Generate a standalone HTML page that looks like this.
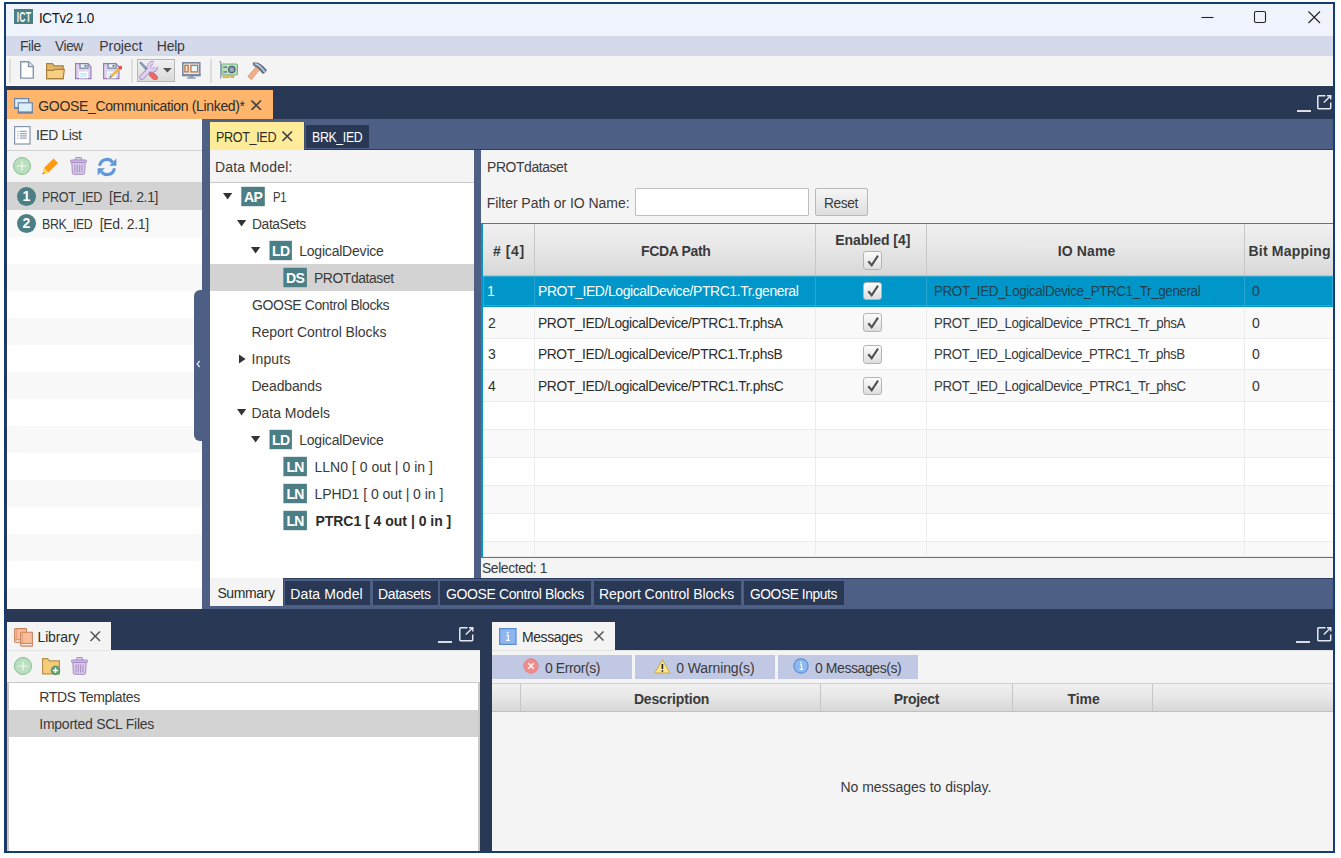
<!DOCTYPE html>
<html lang="en">
<head>
<meta charset="utf-8">
<title>ICTv2 1.0</title>
<style>
*{box-sizing:border-box;margin:0;padding:0}
html,body{width:1341px;height:858px;overflow:hidden;background:#fff}
body{position:relative;font-family:"Liberation Sans",sans-serif;font-size:14px;color:#3a3a3a;line-height:1}
.a{position:absolute}
.t{position:absolute;white-space:pre;line-height:16px;height:16px}
.w{color:#fff}
.b{font-weight:700}
#win{left:4px;top:2px;width:1331px;height:851px;background:#283855;border:2px solid #123c78}
/* inside #win coordinates are offset by 6,4 : we use a shim */
#in{left:-6px;top:-4px;width:1341px;height:858px}
#title{left:6px;top:4px;width:1327px;height:32px;background:#eff3fb}
#menu{left:6px;top:36px;width:1327px;height:20px;background:#d5daea}
#tool{left:6px;top:56px;width:1327px;height:30px;background:#f4f4f4}
.sep{width:2px;background:#dedede;top:59px;height:23.500px}
.mid{background:#4d5f84}
.pane{background:#f4f4f4}
.sel{background:#d3d3d3}
.ic{background:#4b7f85;color:#fff;font-weight:700;text-align:center;font-size:14px;line-height:20px;height:20px;width:23px;letter-spacing:-0.700px}
.tab{background:#283855;color:#fff}
.hd{background:linear-gradient(#f0f0f0,#e6e6e6 50%,#d8d8d8);border-right:1px solid #c6c6c6;border-bottom:1px solid #c0c0c0}
.cb{width:19px;height:18.500px;border:1px solid #b4b4b4;border-radius:3px;background:linear-gradient(#fdfdfd,#dedede)}
.fb{background:#c1c8e4;height:24px;top:655px}
</style>
</head>
<body>
<div id="win" class="a"><div id="in" class="a">

<!-- title bar -->
<div id="title" class="a"></div>
<div class="a" style="left:14.300px;top:9.200px;width:18.500px;height:15px;background:#4b7f85"></div><div class="a b" style="left:3.500px;top:8.500px;width:40px;height:16px;line-height:16px;text-align:center;color:#eef6f6;font-size:14.500px;letter-spacing:0.300px;transform:scaleX(0.600)">ICT</div>
<svg class="a" style="left:1195px;top:4px" width="138" height="32" viewBox="0 0 138 32"><g stroke="#222" stroke-width="1.1" fill="none"><path d="M6.500 13.500H18.500"/><rect x="59.500" y="7.500" width="11" height="11" rx="1.500"/><path d="M113.500 7.500L125 19M125 7.500L113.500 19"/></g></svg>

<!-- menu bar -->
<div id="menu" class="a"></div>

<!-- toolbar -->
<div id="tool" class="a"></div>
<div class="a" style="left:6px;top:85px;width:1327px;height:1px;background:#fdfdfd"></div>
<div class="a sep" style="left:9.200px"></div>
<div class="a sep" style="left:130.800px"></div>
<div class="a sep" style="left:210.400px"></div>
<div class="a" style="left:137px;top:59px;width:38px;height:23px;border:1px solid #b6b6b6;background:linear-gradient(#f0f0f0,#dadada)"></div>
<svg class="a" style="left:20px;top:61.4px" width="14" height="18" viewBox="0 0 14 18"><path d="M0.700 0.700H8.800L13.300 5.200V17.100H0.700Z" fill="#fff" stroke="#8496ab" stroke-width="1.400"/><path d="M8.500 0.700V5.500H13.300" fill="#eef2f6" stroke="#8496ab" stroke-width="1.400"/></svg>
<svg class="a" style="left:45.8px;top:62.7px" width="19" height="17" viewBox="0 0 19 17"><path d="M0.600 15.600V0.600H6.500L8 2.800H17.200V15.600Z" fill="#e5b96a" stroke="#a9803f" stroke-width="1.200"/><path d="M0.600 15.600V7.400H7.500L8.500 6.400H18.300L17.200 15.600Z" fill="#f6cf82" stroke="#a9803f" stroke-width="1.200"/></svg>
<svg class="a" style="left:74.7px;top:62.7px" width="17" height="17" viewBox="0 0 17 17"><path d="M0.600 0.600H12.800L15.900 3.700V15.600H0.600Z" fill="#dfd4f1" stroke="#9a7bb3" stroke-width="1.200"/><rect x="5" y="0.600" width="8" height="4.600" fill="#eef2f8" stroke="#76869e" stroke-width="1.200"/><rect x="9.500" y="1.800" width="2" height="2.300" fill="#76869e"/><rect x="4" y="8.600" width="9" height="6.800" fill="#fff"/><path d="M5 11H12M5 13.200H12" stroke="#bfe3f8" stroke-width="1.300"/></svg>
<svg class="a" style="left:102.7px;top:62.7px" width="19" height="17" viewBox="0 0 19 17"><path d="M0.600 0.600H12.800L15.900 3.700V15.600H0.600Z" fill="#dfd4f1" stroke="#9a7bb3" stroke-width="1.200"/><rect x="5" y="0.600" width="8" height="4.600" fill="#eef2f8" stroke="#76869e" stroke-width="1.200"/><rect x="9.500" y="1.800" width="2" height="2.300" fill="#76869e"/><rect x="4" y="8.600" width="9" height="6.800" fill="#fff"/><path d="M5 11H12M5 13.200H12" stroke="#bfe3f8" stroke-width="1.300"/><path d="M16.500 3.500L18.600 5.600L9 14.300L7.300 12.600Z" fill="#e8b848"/><path d="M7.300 12.600L9 14.300L6 15.500Z" fill="#8a7a60"/><circle cx="17.300" cy="4.600" r="1.900" fill="#e85050"/></svg>
<svg class="a" style="left:139.3px;top:61.3px" width="19" height="19" viewBox="0 0 19 19"><path d="M1.800 2L8.800 9.300" stroke="#6e82a4" stroke-width="2.500" stroke-linecap="round"/><path d="M2.200 2.400L6 6.400" stroke="#a9bcd6" stroke-width="1" stroke-linecap="round"/><path d="M8.500 9L11.500 12.200" stroke="#6e82a4" stroke-width="1.500"/><ellipse cx="14.400" cy="15" rx="4.900" ry="2.600" transform="rotate(40 14.400 15)" fill="#ea6a6a" stroke="#d85252" stroke-width="0.700"/><path d="M2.900 16.300L10.600 8.400" stroke="#a78cc8" stroke-width="5.200" stroke-linecap="round"/><path d="M17.050 6.010A3.600 3.600 0 1 1 14.240 2.220" fill="none" stroke="#a78cc8" stroke-width="4.300"/><path d="M16.850 6.320A3.600 3.600 0 1 1 13.920 2.150" fill="none" stroke="#ddd0f2" stroke-width="2.900"/><path d="M2.900 16.300L11 8" stroke="#ddd0f2" stroke-width="3.600" stroke-linecap="round"/></svg>
<svg class="a" style="left:163.3px;top:68.1px" width="9" height="5" viewBox="0 0 9 5"><path d="M0 0H8.800L4.400 4.600Z" fill="#555"/></svg>
<svg class="a" style="left:181.7px;top:62.3px" width="19" height="17" viewBox="0 0 19 17"><rect x="0.800" y="0.800" width="17" height="12.600" fill="#dbeffb" stroke="#7a8ba3" stroke-width="1.600"/><rect x="0" y="12" width="18.600" height="2.200" fill="#7a8ba3"/><rect x="7.300" y="14" width="4" height="1.600" fill="#8a9bb3"/><rect x="5" y="15.400" width="8.600" height="1.200" fill="#7a8ba3"/><rect x="2.900" y="3.300" width="3.200" height="6.600" fill="#fbe6d6" stroke="#c4733a" stroke-width="1.300"/><rect x="8.900" y="3.300" width="6.800" height="6.600" fill="#eaf6fd" stroke="#c4733a" stroke-width="1.300"/></svg>
<svg class="a" style="left:219px;top:61px" width="19" height="18" viewBox="0 0 19 18"><path d="M0.300 0.500L1.800 1.200V17.500" fill="none" stroke="#8a9bb3" stroke-width="1.300"/><rect x="4.200" y="13.500" width="6" height="3" fill="#f0c860" stroke="#c8a040" stroke-width="0.800"/><rect x="12" y="13.500" width="2.800" height="3" fill="#f0c860" stroke="#c8a040" stroke-width="0.800"/><rect x="2.600" y="3" width="15.800" height="11" rx="1.500" fill="#bde3bc" stroke="#74b57c" stroke-width="1.200"/><rect x="4.300" y="5.300" width="3.800" height="1.800" fill="#7586a8"/><rect x="4.300" y="10" width="3.800" height="1.800" fill="#7586a8"/><circle cx="12.800" cy="8.500" r="3.200" fill="#8e9cb4" stroke="#4f5d75" stroke-width="1.200"/><circle cx="12.800" cy="8.500" r="1.300" fill="#a3b0c5"/></svg>
<svg class="a" style="left:246.8px;top:61.8px" width="21" height="19" viewBox="0 0 21 19"><path d="M2.400 16.200L10.800 6.400" stroke="#d8926a" stroke-width="5.200" stroke-linecap="butt"/><path d="M2.800 15.700L10.800 6.400" stroke="#f4b088" stroke-width="3.900" stroke-linecap="butt"/><path d="M6 0.900Q9 0.300 11.600 1.300Q15.500 3.200 19.600 8.200L16.800 11.600L14.600 10.400L13.200 8.200Q10.500 5.200 6.600 3.300Z" fill="#5d6c82" stroke="#4c5a6e" stroke-width="0.600" stroke-linejoin="round"/><path d="M8.600 1.900Q12.500 3.200 16 7.500" stroke="#c3cfdc" stroke-width="1.700" fill="none" stroke-linecap="round"/><path d="M16.300 8.300L17.600 9.600" stroke="#b3c1d1" stroke-width="2" stroke-linecap="round"/></svg>

<!-- project tab -->
<div class="a" style="left:7px;top:90px;width:266px;height:29px;background:#ffb56b"></div>
<svg class="a" style="left:14.1px;top:97.8px" width="19" height="16" viewBox="0 0 19 16"><rect x="0.600" y="0.600" width="14" height="9.600" fill="#dbeffb" stroke="#6e84a4" stroke-width="1.200"/><rect x="0" y="9" width="15.200" height="1.900" fill="#6e84a4"/><rect x="4.300" y="4.800" width="14" height="9.600" fill="#dbeffb" stroke="#6e84a4" stroke-width="1.200"/><rect x="3.700" y="13.500" width="15.200" height="2.200" fill="#6e84a4"/></svg><svg class="a" style="left:251.4px;top:99.8px" width="10.5" height="10.5" viewBox="0 0 10.5 10.5"><path d="M0.500 0.500L10.0 10.0M10.0 0.500L0.500 10.0" stroke="#444" stroke-width="1.6" fill="none"/></svg>

<!-- main area -->
<div class="a mid" style="left:201px;top:119px;width:1132px;height:490px"></div>
<div class="a pane" style="left:7px;top:119px;width:195px;height:490px"></div>

<!-- IED list -->
<div class="a" style="left:7px;top:150px;width:195px;height:1px;background:#d0d0d0"></div>
<div class="a" style="left:7px;top:182.500px;width:195px;height:426.500px;background:repeating-linear-gradient(#fff 0,#fff 27px,#f8f8f8 27px,#f8f8f8 54px)"></div>
<div class="a sel" style="left:7px;top:182px;width:195px;height:27.500px"></div>
<div class="a" style="left:7px;top:209.500px;width:195px;height:27px;background:#f9f9f9"></div>
<svg class="a" style="left:14.1px;top:125.8px" width="17" height="19" viewBox="0 0 17 19"><rect x="0.600" y="0.600" width="15.400" height="17.400" fill="#fff" stroke="#8496ab" stroke-width="1.200"/><path d="M5.800 5.400H12.800M5.800 7.700H12.800M5.800 9.900H12.800M5.800 12.200H12.800" stroke="#97a6b8" stroke-width="1.300"/><path d="M3.300 5.400H4.400M3.300 7.700H4.400M3.300 9.900H4.400M3.300 12.200H4.400" stroke="#97a6b8" stroke-width="1.100"/></svg>
<svg class="a" style="left:11.899999999999999px;top:155.9px" width="20" height="20" viewBox="0 0 20 20"><circle cx="10" cy="10" r="8.5" fill="#b9dfbf" stroke="#86c094" stroke-width="1"/><path d="M5.500 10H14.500M10 5.500V14.500" stroke="#f4fbf5" stroke-width="1.200"/></svg>
<svg class="a" style="left:42px;top:158.3px" width="17" height="17" viewBox="0 0 17 17"><path d="M11 1L15.500 5.500L6 15L1.500 10.500Z" fill="#ff9a10" transform="translate(0.500,-0.500)"/><path d="M2 10L6.500 14.500L0.500 16.200Z" fill="#ffd040"/><path d="M0.500 16.200L1 14.200L2.600 15.700Z" fill="#777"/></svg>
<svg class="a" style="left:70.2px;top:157.2px" width="17" height="18" viewBox="0 0 17 18"><path d="M5.500 3V1.200Q5.500 0.500 6.300 0.500H10.700Q11.500 0.500 11.500 1.200V3" fill="#d9cdea" stroke="#a68cc2" stroke-width="1"/><rect x="0.500" y="3" width="16" height="2.500" rx="0.800" fill="#cbbbe0" stroke="#a68cc2" stroke-width="1"/><path d="M1.800 5.500H15.200L14.600 16.200Q14.500 17.300 13.400 17.300H3.600Q2.500 17.300 2.400 16.200Z" fill="#d9cdea" stroke="#a68cc2" stroke-width="1"/><path d="M5 7.500V15.500M7.300 7.500V15.500M9.700 7.500V15.500M12 7.500V15.500" stroke="#a68cc2" stroke-width="1"/></svg>
<svg class="a" style="left:96.6px;top:156.8px" width="20" height="20" viewBox="0 0 20 20"><g fill="none" stroke="#5e97dc" stroke-width="3.100"><path d="M2.600 8.800A7.300 7.300 0 0 1 15.600 5.200"/><path d="M17.400 11.200A7.300 7.300 0 0 1 4.400 14.800"/></g><path d="M19.400 1.600V8.800H12.200Z" fill="#5e97dc"/><path d="M0.600 18.400V11.200H7.800Z" fill="#5e97dc"/></svg>
<div class="a" style="left:16.5px;top:186.79999999999998px;width:19.600px;height:19.600px;border-radius:50%;background:#4b7f85"></div><div class="a b" style="left:16.5px;top:188.29999999999998px;width:19.600px;height:16px;line-height:16px;text-align:center;color:#fff;font-size:14px">1</div>
<div class="a" style="left:16.5px;top:213.79999999999998px;width:19.600px;height:19.600px;border-radius:50%;background:#4b7f85"></div><div class="a b" style="left:16.5px;top:215.29999999999998px;width:19.600px;height:16px;line-height:16px;text-align:center;color:#fff;font-size:14px">2</div>
<div class="a mid" style="left:194px;top:289.500px;width:10px;height:151px;border-radius:6px 0 0 6px"></div>
<svg class="a" style="left:195px;top:359px" width="8" height="10" viewBox="0 0 8 10"><path d="M4.600 2L2.200 5L4.600 8" stroke="#dfe4ee" stroke-width="1.300" fill="none"/></svg>

<!-- IED tabs -->
<div class="a" style="left:210px;top:149px;width:1123px;height:1px;background:#2d3d5d"></div>
<div class="a" style="left:209.500px;top:121.500px;width:95px;height:29px;background:#3b4b6e"></div>
<div class="a" style="left:210px;top:122px;width:94px;height:28px;background:#ffec99"></div>
<div class="a tab" style="left:306px;top:125px;width:63px;height:23px"></div>
<svg class="a" style="left:282.3px;top:131.2px" width="10.5" height="10.5" viewBox="0 0 10.5 10.5"><path d="M0.500 0.500L10.0 10.0M10.0 0.500L0.500 10.0" stroke="#444" stroke-width="1.6" fill="none"/></svg><div class="a" style="left:1296.5px;top:109.6px;width:14px;height:2px;background:#d9dde6"></div><svg class="a" style="left:1317px;top:95px" width="15" height="15" viewBox="0 0 15 15"><path d="M8.500 0.800H1.500Q0.800 0.800 0.800 1.500V13Q0.800 13.700 1.500 13.700H13Q13.700 13.700 13.700 13V7.500" fill="none" stroke="#e6e9ef" stroke-width="1.500"/><path d="M6.800 7.600L13.500 1M10 0.800H13.800V4.600" fill="none" stroke="#e6e9ef" stroke-width="1.400"/></svg>

<!-- data model tree -->
<div class="a pane" style="left:210px;top:150px;width:264px;height:33px"></div>
<div class="a" style="left:210px;top:182px;width:264px;height:1px;background:#c8c8c8"></div>
<div class="a" style="left:210px;top:183px;width:264px;height:395px;background:#fff"></div>
<div class="a sel" style="left:210px;top:264px;width:264px;height:27px"></div>
<svg class="a" style="left:223px;top:193.0px" width="10" height="7" viewBox="0 0 10 7"><path d="M0 0H9.200L4.600 6.600Z" fill="#333"/></svg>
<svg class="a" style="left:241px;top:186px" width="26" height="22"><rect x="0.30" y="0.80" width="23.5" height="19.4" fill="#4b7f85"/></svg><div class="a ic" style="left:241.3px;top:186.8px;width:23.5px;height:20px;line-height:20px;background:none">AP</div>
<svg class="a" style="left:237px;top:220.0px" width="10" height="7" viewBox="0 0 10 7"><path d="M0 0H9.200L4.600 6.600Z" fill="#333"/></svg>
<svg class="a" style="left:251px;top:247.0px" width="10" height="7" viewBox="0 0 10 7"><path d="M0 0H9.200L4.600 6.600Z" fill="#333"/></svg>
<svg class="a" style="left:269px;top:240px" width="25" height="22"><rect x="0.50" y="0.80" width="22.4" height="19.4" fill="#4b7f85"/></svg><div class="a ic" style="left:269.5px;top:240.8px;width:22.4px;height:20px;line-height:20px;background:none">LD</div>
<svg class="a" style="left:283px;top:267px" width="26" height="22"><rect x="0.40" y="0.80" width="23.5" height="19.4" fill="#4b7f85"/></svg><div class="a ic" style="left:283.4px;top:267.8px;width:23.5px;height:20px;line-height:20px;background:none">DS</div>
<svg class="a" style="left:238.5px;top:353.5px" width="7" height="10" viewBox="0 0 7 10"><path d="M0 0.400V9.600L6.600 5Z" fill="#333"/></svg>
<svg class="a" style="left:237px;top:409.0px" width="10" height="7" viewBox="0 0 10 7"><path d="M0 0H9.200L4.600 6.600Z" fill="#333"/></svg>
<svg class="a" style="left:251px;top:436.0px" width="10" height="7" viewBox="0 0 10 7"><path d="M0 0H9.200L4.600 6.600Z" fill="#333"/></svg>
<svg class="a" style="left:269px;top:429px" width="25" height="22"><rect x="0.50" y="0.80" width="22.4" height="19.4" fill="#4b7f85"/></svg><div class="a ic" style="left:269.5px;top:429.8px;width:22.4px;height:20px;line-height:20px;background:none">LD</div>
<svg class="a" style="left:283px;top:456px" width="26" height="22"><rect x="0.40" y="0.80" width="23.5" height="19.4" fill="#4b7f85"/></svg><div class="a ic" style="left:283.4px;top:456.8px;width:23.5px;height:20px;line-height:20px;background:none">LN</div>
<svg class="a" style="left:283px;top:483px" width="26" height="22"><rect x="0.40" y="0.80" width="23.5" height="19.4" fill="#4b7f85"/></svg><div class="a ic" style="left:283.4px;top:483.8px;width:23.5px;height:20px;line-height:20px;background:none">LN</div>
<svg class="a" style="left:283px;top:510px" width="26" height="22"><rect x="0.40" y="0.80" width="23.5" height="19.4" fill="#4b7f85"/></svg><div class="a ic" style="left:283.4px;top:510.8px;width:23.5px;height:20px;line-height:20px;background:none">LN</div>

<!-- dataset pane -->
<div class="a pane" style="left:481px;top:150px;width:852px;height:428px"></div>
<div class="a" style="left:635px;top:188px;width:174px;height:28px;background:#fff;border:1px solid #bebebe;border-radius:1px"></div>
<div class="a" style="left:815px;top:188px;width:53px;height:28px;border:1px solid #b8b8b8;border-radius:2px;background:linear-gradient(#f6f6f6,#dedede)"></div>
<div class="a" style="left:481px;top:223px;width:852px;height:335px;background:#fff;border:1px solid #0096c9;border-left-width:2px;border-right:0"></div>
<div class="a hd" style="left:483px;top:224px;width:52px;height:52px;"></div>
<div class="a hd" style="left:535px;top:224px;width:281px;height:52px;"></div>
<div class="a hd" style="left:816px;top:224px;width:111px;height:52px;"></div>
<div class="a hd" style="left:927px;top:224px;width:318px;height:52px;"></div>
<div class="a hd" style="left:1245px;top:224px;width:88px;height:52px;border-right:0;"></div>
<div class="a" style="left:483px;top:276px;width:850px;height:31px;background:#0096c9;border-bottom:1px solid #0096c9;box-shadow:inset 0 0 0 1px rgba(255,255,255,.18);"></div>
<div class="a" style="left:483px;top:307px;width:850px;height:31.5px;background:#f9f9f9;border-bottom:1px solid #ececec;"></div>
<div class="a" style="left:483px;top:338.5px;width:850px;height:31.5px;background:#fff;border-bottom:1px solid #ececec;"></div>
<div class="a" style="left:483px;top:370px;width:850px;height:31.5px;background:#f9f9f9;border-bottom:1px solid #ececec;"></div>
<div class="a" style="left:483px;top:401.5px;width:850px;height:28.0px;background:#fff;border-bottom:1px solid #ececec;"></div>
<div class="a" style="left:483px;top:429.5px;width:850px;height:28.0px;background:#f9f9f9;border-bottom:1px solid #ececec;"></div>
<div class="a" style="left:483px;top:457.5px;width:850px;height:28.0px;background:#fff;border-bottom:1px solid #ececec;"></div>
<div class="a" style="left:483px;top:485.5px;width:850px;height:28.0px;background:#f9f9f9;border-bottom:1px solid #ececec;"></div>
<div class="a" style="left:483px;top:513.5px;width:850px;height:28.0px;background:#fff;border-bottom:1px solid #ececec;"></div>
<div class="a" style="left:483px;top:541.5px;width:850px;height:15.5px;background:#f9f9f9;border-bottom:1px solid #ececec;"></div>
<div class="a" style="left:534px;top:276px;width:1px;height:281px;background:#ececec"></div>
<div class="a" style="left:534px;top:276px;width:1px;height:31px;background:#2aa6d2"></div>
<div class="a" style="left:815px;top:276px;width:1px;height:281px;background:#ececec"></div>
<div class="a" style="left:815px;top:276px;width:1px;height:31px;background:#2aa6d2"></div>
<div class="a" style="left:926px;top:276px;width:1px;height:281px;background:#ececec"></div>
<div class="a" style="left:926px;top:276px;width:1px;height:31px;background:#2aa6d2"></div>
<div class="a" style="left:1244px;top:276px;width:1px;height:281px;background:#ececec"></div>
<div class="a" style="left:1244px;top:276px;width:1px;height:31px;background:#2aa6d2"></div>
<div class="a cb" style="left:863.0px;top:251.2px"></div><svg class="a" style="left:863.5px;top:251.5px" width="18" height="18" viewBox="0 0 18 18"><path d="M4.300 9.300L7.700 13.300L14 3.700" stroke="#505050" stroke-width="2.100" fill="none"/></svg>
<div class="a cb" style="left:863.0px;top:281.9px"></div><svg class="a" style="left:863.5px;top:282.2px" width="18" height="18" viewBox="0 0 18 18"><path d="M4.300 9.300L7.700 13.300L14 3.700" stroke="#505050" stroke-width="2.100" fill="none"/></svg>
<div class="a cb" style="left:863.0px;top:313.4px"></div><svg class="a" style="left:863.5px;top:313.7px" width="18" height="18" viewBox="0 0 18 18"><path d="M4.300 9.300L7.700 13.300L14 3.700" stroke="#505050" stroke-width="2.100" fill="none"/></svg>
<div class="a cb" style="left:863.0px;top:345.0px"></div><svg class="a" style="left:863.5px;top:345.3px" width="18" height="18" viewBox="0 0 18 18"><path d="M4.300 9.300L7.700 13.300L14 3.700" stroke="#505050" stroke-width="2.100" fill="none"/></svg>
<div class="a cb" style="left:863.0px;top:376.7px"></div><svg class="a" style="left:863.5px;top:377.0px" width="18" height="18" viewBox="0 0 18 18"><path d="M4.300 9.300L7.700 13.300L14 3.700" stroke="#505050" stroke-width="2.100" fill="none"/></svg>

<!-- bottom tabs of main -->
<div class="a" style="left:210px;top:577.700px;width:1123px;height:1px;background:#2d3d5d"></div>
<div class="a" style="left:209.500px;top:578px;width:74px;height:28px;background:#3b4b6e"></div>
<div class="a" style="left:210px;top:578px;width:73px;height:28px;background:#f4f4f4"></div>
<div class="a tab" style="left:285px;top:581px;width:85px;height:24px"></div>
<div class="a tab" style="left:373px;top:581px;width:65px;height:24px"></div>
<div class="a tab" style="left:440px;top:581px;width:151px;height:24px"></div>
<div class="a tab" style="left:594px;top:581px;width:147px;height:24px"></div>
<div class="a tab" style="left:744px;top:581px;width:100px;height:24px"></div>

<!-- library -->
<div class="a pane" style="left:7px;top:622px;width:104px;height:28px"></div>
<div class="a pane" style="left:7px;top:650px;width:473px;height:201px;border-top:1px solid #e4e4e4"></div>
<div class="a" style="left:7px;top:682px;width:473px;height:169px;background:#fff;border:1px solid #c8c8c8;border-width:1px 2px 0 2px"></div>
<div class="a sel" style="left:9px;top:710px;width:469px;height:27px"></div>
<svg class="a" style="left:14px;top:628px" width="19" height="19" viewBox="0 0 19 19"><path d="M0.6 1.6Q0.6 0.6 1.6 0.6H12.4V14.4H1.8Q0.6 14.4 0.6 13.2Z" fill="#f9bd98" stroke="#c98562" stroke-width="1.100"/><path d="M0.6 12.8Q0.8 11.8 2 11.8H12.4V14.4H1.8Q0.6 14.4 0.6 13.2Z" fill="#f0e8e4" stroke="#c98562" stroke-width="1"/><path d="M2.6 1.2V11.4" stroke="#e8a079" stroke-width="1"/><path d="M6.6 5.2Q6.6 4.2 7.6 4.2H18.4V18.0H7.8Q6.6 18.0 6.6 16.8Z" fill="#f9bd98" stroke="#c98562" stroke-width="1.100"/><path d="M6.6 16.400000000000002Q6.8 15.4 8 15.4H18.4V18.0H7.8Q6.6 18.0 6.6 16.8Z" fill="#f0e8e4" stroke="#c98562" stroke-width="1"/><path d="M8.6 4.8V15.0" stroke="#e8a079" stroke-width="1"/></svg>
<svg class="a" style="left:90px;top:631.3px" width="10.5" height="10.5" viewBox="0 0 10.5 10.5"><path d="M0.500 0.500L10.0 10.0M10.0 0.500L0.500 10.0" stroke="#555" stroke-width="1.5" fill="none"/></svg>
<svg class="a" style="left:13px;top:656px" width="20" height="20" viewBox="0 0 20 20"><circle cx="10" cy="10" r="8.5" fill="#b9dfbf" stroke="#86c094" stroke-width="1"/><path d="M5.500 10H14.500M10 5.500V14.500" stroke="#f4fbf5" stroke-width="1.200"/></svg>
<svg class="a" style="left:42.2px;top:658.2px" width="19" height="18" viewBox="0 0 19 18"><path d="M0.600 15.800V0.600H5.500L7.400 2.800H17.400V15.800Z" fill="#f5cd7a" stroke="#b8904a" stroke-width="1.200"/><circle cx="13.500" cy="12.400" r="4.800" fill="#5c9c70"/><path d="M10.800 12.400H16.200M13.500 9.700V15.100" stroke="#fff" stroke-width="1.500"/></svg>
<svg class="a" style="left:71.3px;top:657.2px" width="17" height="18" viewBox="0 0 17 18"><path d="M5.500 3V1.200Q5.500 0.500 6.300 0.500H10.700Q11.500 0.500 11.500 1.200V3" fill="#d9cdea" stroke="#a68cc2" stroke-width="1"/><rect x="0.500" y="3" width="16" height="2.500" rx="0.800" fill="#cbbbe0" stroke="#a68cc2" stroke-width="1"/><path d="M1.800 5.500H15.200L14.600 16.200Q14.500 17.300 13.400 17.300H3.600Q2.500 17.300 2.400 16.200Z" fill="#d9cdea" stroke="#a68cc2" stroke-width="1"/><path d="M5 7.500V15.500M7.300 7.500V15.500M9.700 7.500V15.500M12 7.500V15.500" stroke="#a68cc2" stroke-width="1"/></svg>
<div class="a" style="left:438.2px;top:640.7px;width:14px;height:2px;background:#d9dde6"></div><svg class="a" style="left:458.8px;top:626.8px" width="15" height="15" viewBox="0 0 15 15"><path d="M8.500 0.800H1.500Q0.800 0.800 0.800 1.500V13Q0.800 13.700 1.500 13.700H13Q13.700 13.700 13.700 13V7.500" fill="none" stroke="#e6e9ef" stroke-width="1.500"/><path d="M6.800 7.600L13.500 1M10 0.800H13.800V4.600" fill="none" stroke="#e6e9ef" stroke-width="1.400"/></svg>

<!-- messages -->
<div class="a pane" style="left:492px;top:622px;width:123px;height:28px"></div>
<div class="a pane" style="left:492px;top:650px;width:841px;height:201px;border-top:1px solid #e4e4e4"></div>
<div class="a fb" style="left:492px;width:140px"></div>
<div class="a fb" style="left:635px;width:140px"></div>
<div class="a fb" style="left:778px;width:140px"></div>
<div class="a hd" style="left:492px;top:683px;width:29px;height:29px;border-top:1px solid #d0d0d0"></div>
<div class="a hd" style="left:521px;top:683px;width:300px;height:29px;border-top:1px solid #d0d0d0"></div>
<div class="a hd" style="left:821px;top:683px;width:192px;height:29px;border-top:1px solid #d0d0d0"></div>
<div class="a hd" style="left:1013px;top:683px;width:140px;height:29px;border-top:1px solid #d0d0d0"></div>
<div class="a hd" style="left:1153px;top:683px;width:180px;height:29px;border-top:1px solid #d0d0d0;border-right:0"></div>
<svg class="a" style="left:499px;top:628.2px" width="18" height="17" viewBox="0 0 18 17"><rect x="0.600" y="0.600" width="16.400" height="15.800" fill="#8db6ee" stroke="#5a8ad2" stroke-width="1.200"/><circle cx="8.700" cy="4.800" r="1" fill="#fff"/><path d="M7.300 7.300H9.300V12.200M7 12.300H10.800" stroke="#fff" stroke-width="1.300" fill="none"/></svg>
<svg class="a" style="left:593.6px;top:631.3px" width="10" height="10" viewBox="0 0 10 10"><path d="M0.500 0.500L9.5 9.5M9.5 0.500L0.500 9.5" stroke="#555" stroke-width="1.5" fill="none"/></svg>
<svg class="a" style="left:523.4px;top:658.1px" width="16" height="16" viewBox="0 0 16 16"><circle cx="8" cy="8" r="7.200" fill="#f08c8c" stroke="#e67878" stroke-width="0.800"/><path d="M5.300 5.300L10.700 10.700M10.700 5.300L5.300 10.700" stroke="#fff" stroke-width="1.400"/></svg>
<svg class="a" style="left:654.4px;top:659px" width="17" height="15" viewBox="0 0 17 15"><path d="M8.400 0.800L16 14H0.800Z" fill="#fbe58c" stroke="#c8a848" stroke-width="1" stroke-linejoin="round"/><path d="M8.400 5V10" stroke="#222" stroke-width="1.600"/><circle cx="8.400" cy="11.900" r="0.900" fill="#222"/></svg>
<svg class="a" style="left:793.4px;top:658px" width="16" height="16" viewBox="0 0 16 16"><circle cx="8" cy="8" r="7.100" fill="#8db9f0" stroke="#5a90d8" stroke-width="1.100"/><circle cx="8" cy="4.600" r="0.900" fill="#fff"/><path d="M6.900 6.800H8.600V11.200M6.600 11.400H10" stroke="#fff" stroke-width="1.100" fill="none"/></svg>
<div class="a" style="left:1296.3px;top:640.7px;width:14px;height:2px;background:#d9dde6"></div><svg class="a" style="left:1317.2px;top:626.8px" width="15" height="15" viewBox="0 0 15 15"><path d="M8.500 0.800H1.500Q0.800 0.800 0.800 1.500V13Q0.800 13.700 1.500 13.700H13Q13.700 13.700 13.700 13V7.500" fill="none" stroke="#e6e9ef" stroke-width="1.500"/><path d="M6.800 7.600L13.500 1M10 0.800H13.800V4.600" fill="none" stroke="#e6e9ef" stroke-width="1.400"/></svg>

<div class="t" style="left:38.64px;top:9.56px;letter-spacing:-0.400px;transform:scaleX(0.9594);transform-origin:0 0;color:#111;">ICTv2 1.0</div>
<div class="t" style="left:19.50px;top:37.86px;letter-spacing:-0.400px;transform:scaleX(0.9965);transform-origin:0 0;">File</div>
<div class="t" style="left:55.20px;top:37.86px;letter-spacing:-0.400px;transform:scaleX(0.9771);transform-origin:0 0;">View</div>
<div class="t" style="left:99.30px;top:37.86px;letter-spacing:-0.080px;">Project</div>
<div class="t" style="left:156.80px;top:37.86px;letter-spacing:-0.269px;">Help</div>
<div class="t" style="left:38.30px;top:98.16px;letter-spacing:-0.341px;color:#2c2c2c;">GOOSE_Communication (Linked)*</div>
<div class="t" style="left:35.81px;top:126.66px;letter-spacing:-0.400px;transform:scaleX(0.9929);transform-origin:0 0;">IED List</div>
<div class="t" style="left:42.00px;top:188.86px;letter-spacing:-0.400px;transform:scaleX(0.8971);transform-origin:0 0;">PROT_IED</div>
<div class="t" style="left:109.10px;top:188.86px;letter-spacing:-0.344px;">[Ed. 2.1]</div>
<div class="t" style="left:42.02px;top:215.86px;letter-spacing:-0.400px;transform:scaleX(0.8830);transform-origin:0 0;">BRK_IED</div>
<div class="t" style="left:99.70px;top:215.86px;letter-spacing:-0.332px;">[Ed. 2.1]</div>
<div class="t" style="left:216.40px;top:129.16px;letter-spacing:-0.400px;transform:scaleX(0.9001);transform-origin:0 0;color:#2c2c2c;">PROT_IED</div>
<div class="t" style="left:311.82px;top:129.16px;letter-spacing:-0.400px;transform:scaleX(0.8812);transform-origin:0 0;color:#fff;">BRK_IED</div>
<div class="t" style="left:214.90px;top:158.86px;letter-spacing:0.211px;">Data Model:</div>
<div class="t" style="left:272.69px;top:188.86px;letter-spacing:-0.400px;transform:scaleX(0.8094);transform-origin:0 0;">P1</div>
<div class="t" style="left:251.81px;top:215.86px;letter-spacing:-0.400px;transform:scaleX(0.9872);transform-origin:0 0;">DataSets</div>
<div class="t" style="left:299.20px;top:242.86px;letter-spacing:-0.206px;">LogicalDevice</div>
<div class="t" style="left:314.41px;top:269.86px;letter-spacing:-0.400px;transform:scaleX(0.9909);transform-origin:0 0;">PROTdataset</div>
<div class="t" style="left:252.40px;top:296.86px;letter-spacing:-0.400px;transform:scaleX(0.9979);transform-origin:0 0;">GOOSE Control Blocks</div>
<div class="t" style="left:251.40px;top:323.86px;letter-spacing:-0.053px;">Report Control Blocks</div>
<div class="t" style="left:251.40px;top:350.86px;letter-spacing:0.172px;">Inputs</div>
<div class="t" style="left:251.40px;top:377.86px;letter-spacing:-0.139px;">Deadbands</div>
<div class="t" style="left:251.40px;top:404.86px;letter-spacing:0.001px;">Data Models</div>
<div class="t" style="left:299.20px;top:431.86px;letter-spacing:-0.206px;">LogicalDevice</div>
<div class="t" style="left:314.40px;top:458.86px;letter-spacing:0.022px;">LLN0 [ 0 out | 0 in ]</div>
<div class="t" style="left:314.40px;top:485.86px;letter-spacing:-0.039px;">LPHD1 [ 0 out | 0 in ]</div>
<div class="t b" style="left:315.40px;top:512.86px;letter-spacing:-0.013px;color:#2c2c2c;">PTRC1 [ 4 out | 0 in ]</div>
<div class="t" style="left:486.71px;top:158.56px;letter-spacing:-0.400px;transform:scaleX(0.9934);transform-origin:0 0;">PROTdataset</div>
<div class="t" style="left:486.70px;top:194.76px;letter-spacing:-0.047px;">Filter Path or IO Name:</div>
<div class="t" style="left:823.92px;top:194.76px;letter-spacing:-0.400px;transform:scaleX(0.9800);transform-origin:0 0;">Reset</div>
<div class="t b" style="left:493.00px;top:243.16px;letter-spacing:0.594px;"># [4]</div>
<div class="t b" style="left:641.00px;top:243.16px;letter-spacing:-0.357px;">FCDA Path</div>
<div class="t b" style="left:835.30px;top:232.16px;letter-spacing:-0.039px;">Enabled [4]</div>
<div class="t b" style="left:1057.80px;top:243.16px;letter-spacing:0.131px;">IO Name</div>
<div class="t b" style="left:1248.50px;top:243.16px;letter-spacing:0.196px;">Bit Mapping</div>
<div class="t" style="left:486.90px;top:283.36px;letter-spacing:0.000px;color:#fff;">1</div>
<div class="t" style="left:538.40px;top:283.36px;letter-spacing:-0.400px;transform:scaleX(0.9952);transform-origin:0 0;color:#fff;">PROT_IED/LogicalDevice/PTRC1.Tr.general</div>
<div class="t" style="left:934.24px;top:283.36px;letter-spacing:-0.400px;transform:scaleX(0.9578);transform-origin:0 0;color:#233f4b;">PROT_IED_LogicalDevice_PTRC1_Tr_general</div>
<div class="t" style="left:1252.00px;top:283.36px;letter-spacing:0.000px;color:#233f4b;">0</div>
<div class="t" style="left:487.90px;top:314.86px;letter-spacing:0.000px;color:#333;">2</div>
<div class="t" style="left:538.41px;top:314.86px;letter-spacing:-0.400px;transform:scaleX(0.9854);transform-origin:0 0;color:#2c2c2c;">PROT_IED/LogicalDevice/PTRC1.Tr.phsA</div>
<div class="t" style="left:934.25px;top:314.86px;letter-spacing:-0.400px;transform:scaleX(0.9490);transform-origin:0 0;color:#3a3a3a;">PROT_IED_LogicalDevice_PTRC1_Tr_phsA</div>
<div class="t" style="left:1252.00px;top:314.86px;letter-spacing:0.000px;color:#333;">0</div>
<div class="t" style="left:487.90px;top:346.46px;letter-spacing:0.000px;color:#333;">3</div>
<div class="t" style="left:538.42px;top:346.46px;letter-spacing:-0.400px;transform:scaleX(0.9845);transform-origin:0 0;color:#2c2c2c;">PROT_IED/LogicalDevice/PTRC1.Tr.phsB</div>
<div class="t" style="left:934.25px;top:346.46px;letter-spacing:-0.400px;transform:scaleX(0.9481);transform-origin:0 0;color:#3a3a3a;">PROT_IED_LogicalDevice_PTRC1_Tr_phsB</div>
<div class="t" style="left:1252.00px;top:346.46px;letter-spacing:0.000px;color:#333;">0</div>
<div class="t" style="left:487.90px;top:378.16px;letter-spacing:0.000px;color:#333;">4</div>
<div class="t" style="left:538.41px;top:378.16px;letter-spacing:-0.400px;transform:scaleX(0.9858);transform-origin:0 0;color:#2c2c2c;">PROT_IED/LogicalDevice/PTRC1.Tr.phsC</div>
<div class="t" style="left:934.25px;top:378.16px;letter-spacing:-0.400px;transform:scaleX(0.9494);transform-origin:0 0;color:#3a3a3a;">PROT_IED_LogicalDevice_PTRC1_Tr_phsC</div>
<div class="t" style="left:1252.00px;top:378.16px;letter-spacing:0.000px;color:#333;">0</div>
<div class="t" style="left:481.90px;top:560.16px;letter-spacing:-0.400px;transform:scaleX(0.9900);transform-origin:0 0;">Selected: 1</div>
<div class="t" style="left:217.40px;top:585.36px;letter-spacing:-0.383px;color:#2c2c2c;">Summary</div>
<div class="t" style="left:290.30px;top:585.66px;letter-spacing:0.091px;color:#fff;">Data Model</div>
<div class="t" style="left:378.00px;top:585.66px;letter-spacing:-0.335px;color:#fff;">Datasets</div>
<div class="t" style="left:446.00px;top:585.66px;letter-spacing:-0.378px;color:#fff;">GOOSE Control Blocks</div>
<div class="t" style="left:599.00px;top:585.66px;letter-spacing:-0.048px;color:#fff;">Report Control Blocks</div>
<div class="t" style="left:750.30px;top:585.66px;letter-spacing:-0.400px;transform:scaleX(0.9812);transform-origin:0 0;color:#fff;">GOOSE Inputs</div>
<div class="t" style="left:37.50px;top:629.36px;letter-spacing:-0.149px;color:#2c2c2c;">Library</div>
<div class="t" style="left:39.30px;top:688.96px;letter-spacing:-0.335px;">RTDS Templates</div>
<div class="t" style="left:39.30px;top:715.76px;letter-spacing:-0.254px;">Imported SCL Files</div>
<div class="t" style="left:522.00px;top:629.46px;letter-spacing:-0.400px;transform:scaleX(0.9966);transform-origin:0 0;color:#2c2c2c;">Messages</div>
<div class="t" style="left:544.90px;top:659.56px;letter-spacing:-0.400px;transform:scaleX(0.9991);transform-origin:0 0;">0 Error(s)</div>
<div class="t" style="left:676.20px;top:659.56px;letter-spacing:-0.104px;">0 Warning(s)</div>
<div class="t" style="left:815.20px;top:659.56px;letter-spacing:-0.400px;transform:scaleX(0.9972);transform-origin:0 0;">0 Messages(s)</div>
<div class="t b" style="left:633.90px;top:690.86px;letter-spacing:-0.156px;">Description</div>
<div class="t b" style="left:893.80px;top:690.86px;letter-spacing:-0.300px;">Project</div>
<div class="t b" style="left:1067.40px;top:690.86px;letter-spacing:-0.012px;">Time</div>
<div class="t" style="left:840.50px;top:779.16px;letter-spacing:-0.027px;">No messages to display.</div>
</div></div>
</body>
</html>
